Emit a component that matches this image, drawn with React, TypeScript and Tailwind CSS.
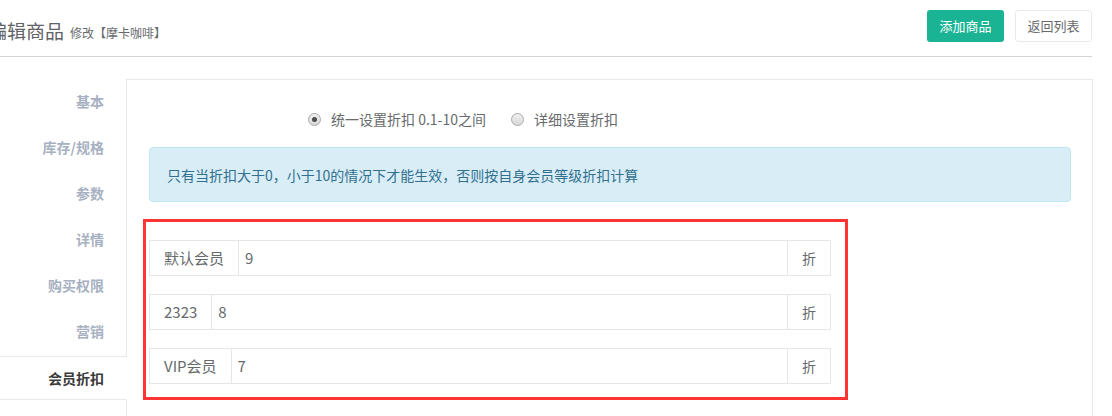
import React from "react";

const tabs = ["基本", "库存/规格", "参数", "详情", "购买权限", "营销", "会员折扣"];

const levels = [
    { name: "默认会员", value: "9" },
    { name: "2323", value: "8" },
    { name: "VIP会员", value: "7" },
];

function Radio({ checked }: { checked?: boolean }) {
    return (
        <span className="w-[13px] h-[13px] rounded-full border border-[#a9a9a9] bg-gradient-to-b from-[#f0f0f0] to-[#d8d8d8] flex items-center justify-center">
            {checked && <span className="w-[5px] h-[5px] rounded-full bg-[#4d4d4d]" />}
        </span>
    );
}

export default function App() {
    return (
        <div className="w-[1112px] h-[416px] overflow-hidden bg-white text-[#676a6c]" style={{ fontFamily: '"Microsoft YaHei", "Noto Sans CJK SC", "Noto Sans", sans-serif' }}>
            <header className="w-[1092px] h-[57px] border-b border-[#d4d4d4] flex items-start justify-between pt-[10px]">
                <div className="flex items-end gap-[6px] ml-[-12px] mt-[10px]">
                    <span className="text-[19px] leading-[22px] text-[#5f6266]">编辑商品</span>
                    <span className="text-[12px] leading-[18px] text-[#676a6c]">修改【摩卡咖啡】</span>
                </div>
                <div className="flex gap-[11px]">
                    <button className="h-[32px] w-[77px] rounded-[3px] bg-[#1ab394] text-white text-[13px]">添加商品</button>
                    <button className="h-[32px] w-[77px] rounded-[3px] bg-white border border-[#e7eaec] text-[#676a6c] text-[13px]">返回列表</button>
                </div>
            </header>

            <div className="flex mt-[22px] w-[1093px]">
                <nav className="w-[126px] shrink-0 pt-px flex flex-col">
                    {tabs.map((t, i) => {
                        const active = i === tabs.length - 1;
                        return (
                            <div
                                key={t}
                                className={
                                    active
                                        ? "h-[44px] mb-[2px] border-y border-[#e7eaec] bg-white relative z-10 mr-[-1px] flex items-center justify-end pr-[23px] text-[14px] font-bold text-[#3a3a3a]"
                                        : "h-[44px] mb-[2px] flex items-center justify-end pr-[22px] pb-[2px] text-[14px] font-bold text-[#a7b1c2]"
                                }
                            >
                                {t}
                            </div>
                        );
                    })}
                </nav>

                <main className="flex-1 border-t border-l border-r border-[#e7eaec] h-[340px] pl-[22px] pr-[21px]">
                    <div className="h-[67px] flex items-center pl-[159px] pt-[12px] text-[14px] text-[#676a6c]">
                        <label className="flex items-center gap-[10px]">
                            <Radio checked />
                            <span>统一设置折扣 0.1-10之间</span>
                        </label>
                        <label className="flex items-center gap-[10px] ml-[25px]">
                            <Radio />
                            <span>详细设置折扣</span>
                        </label>
                    </div>

                    <div className="h-[55px] rounded-[4px] bg-[#d9edf7] border border-[#bce8f1] text-[#31708f] text-[14px] flex items-center pl-[17px] pt-[2px]">
                        只有当折扣大于0，小于10的情况下才能生效，否则按自身会员等级折扣计算
                    </div>

                    <div className="mt-[17px] ml-[-6px] w-[705px] border-[3px] border-[#ff3535] pt-[18px] pl-[3px] pr-[14px] pb-[13px] flex flex-col gap-[18px]">
                        {levels.map((l) => (
                            <div key={l.name} className="h-[36px] flex border border-[#e5e6e7] text-[15px] text-[#676a6c]">
                                <span className="px-[14px] flex items-center border-r border-[#e5e6e7] whitespace-nowrap">{l.name}</span>
                                <span className="flex-1 flex items-center pl-[6px]">{l.value}</span>
                                <span className="w-[43px] flex items-center justify-center border-l border-[#e5e6e7] text-[14px]">折</span>
                            </div>
                        ))}
                    </div>
                </main>
            </div>
        </div>
    );
}
